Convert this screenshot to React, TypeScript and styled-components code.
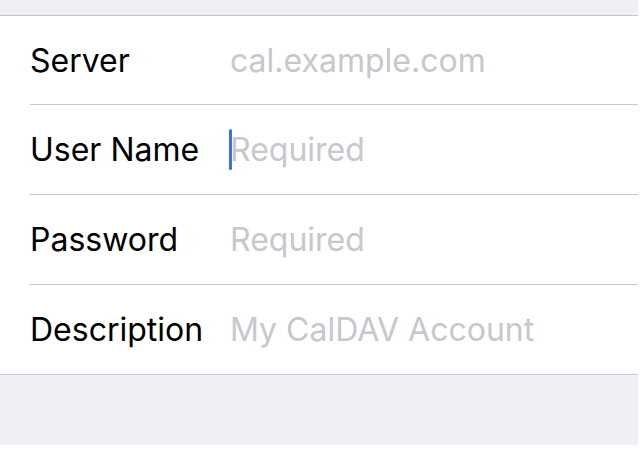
import React from "react";
import styled, { createGlobalStyle } from "styled-components";

type Field = {
    label: string,
    placeholder: string,
    focused?: boolean
}

const FIELDS: Field[] = [
    { label: 'Server', placeholder: 'cal.example.com' },
    { label: 'User Name', placeholder: 'Required', focused: true },
    { label: 'Password', placeholder: 'Required' },
    { label: 'Description', placeholder: 'My CalDAV Account' },
];

export default function App() {
    return (
        <>
            <GlobalStyle />
            <Screen>
                <TopGap />
                <FormGroup>
                    {FIELDS.map((f, i) => (
                        <Row key={f.label} last={i === FIELDS.length - 1}>
                            <Label>{f.label}</Label>
                            <Value>
                                {f.focused && <Caret />}
                                <Placeholder>{f.placeholder}</Placeholder>
                            </Value>
                        </Row>
                    ))}
                </FormGroup>
                <BottomGap />
            </Screen>
        </>
    );
}

//style

const GlobalStyle = createGlobalStyle`
    html, body {
        margin: 0;
        padding: 0;
        background: #FFF;
    }
    body {
        font-family: Inter, "Liberation Sans", sans-serif;
        -webkit-font-smoothing: antialiased;
    }
    * {
        box-sizing: border-box;
    }
`;

const Screen = styled.div`
    width: 638px;
    height: 445px;
    background-color: #EFEFF4;
    display: flex;
    flex-direction: column;
`;

const TopGap = styled.div`
    height: 16px;
    flex-shrink: 0;
    border-bottom: 1px solid #C8C7CC;
`;

const FormGroup = styled.div`
    background-color: #FFF;
    padding-left: 30px;
    border-bottom: 1px solid #C8C7CC;
`;

const Row = styled.div<{ last?: boolean }>`
    height: ${p => p.last ? 89 : 90}px;
    display: flex;
    align-items: center;
    border-bottom: ${p => p.last ? 'none' : '1px solid #C8C7CC'};
    &:first-child {
        height: 89px;
    }
`;

const Label = styled.div`
    width: 200px;
    font-size: 32px;
    color: #000;
`;

const Value = styled.div`
    position: relative;
    display: flex;
    align-items: center;
`;

const Placeholder = styled.span`
    font-size: 32px;
    color: #C7C7CD;
`;

const Caret = styled.span`
    position: absolute;
    left: -1px;
    top: 50%;
    width: 3px;
    height: 41px;
    margin-top: -21px;
    border-radius: 2px;
    background-color: #3E6FE0;
`;

const BottomGap = styled.div`
    flex: 1;
`;
